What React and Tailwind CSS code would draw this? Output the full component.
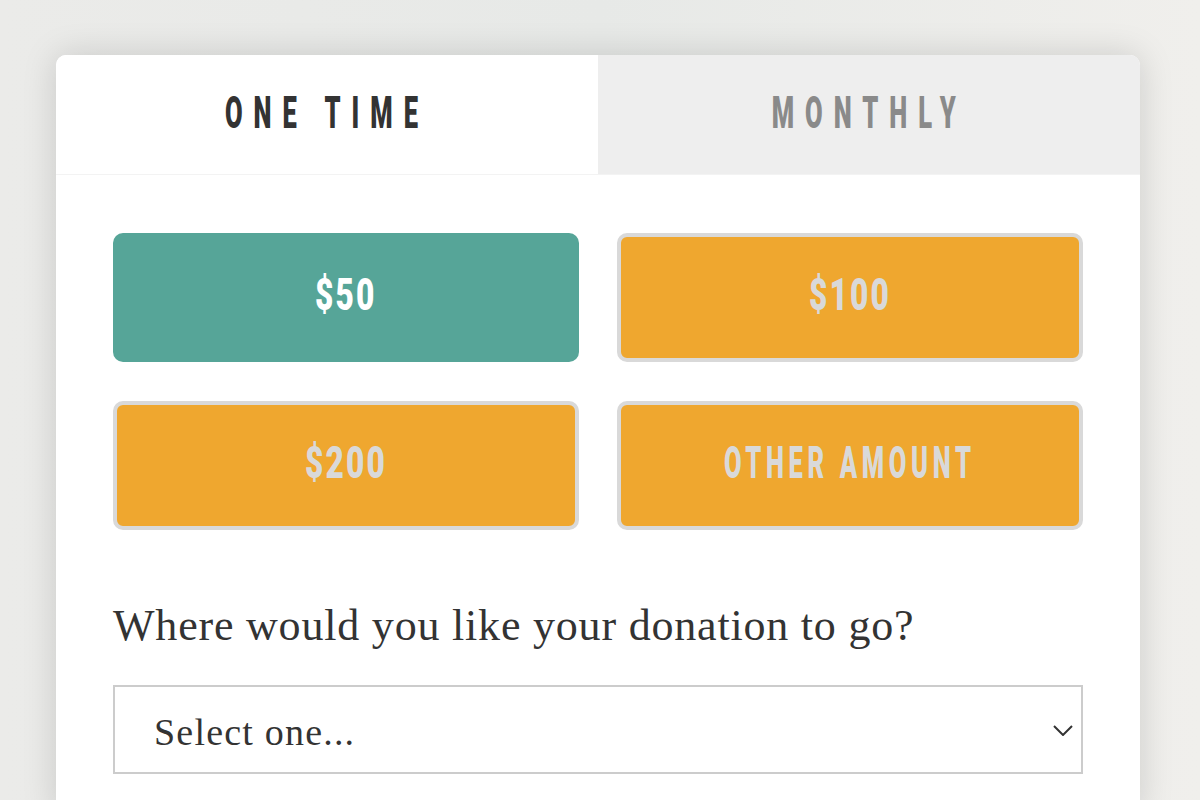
import { useState } from 'react';

const amounts = ['$50', '$100', '$200', 'Other Amount'];

// condensed display type: Roboto squeezed horizontally (no Bebas offline)
function Cond({ children, className = '' }) {
    return (
        <span className={`inline-block origin-center uppercase whitespace-nowrap ${className}`}>
            {children}
        </span>
    );
}

export default function App() {
    const [freq, setFreq] = useState('once');
    const [amount, setAmount] = useState('$50');

    return (
        <div className="h-[800px] overflow-hidden bg-[#e8e9e7] bg-[linear-gradient(90deg,#ebebe9_0%,#e7e9e7_50%,#f0efec_100%)] pl-[56px] pr-[60px] pt-[55px]">
            <div className="rounded-t-[10px] bg-white shadow-[0_0_34px_rgba(0,0,0,0.15)] overflow-hidden">
                {/* frequency tabs */}
                <div className="grid grid-cols-2 h-[120px] border-b border-[#f3f3f3]">
                    <button
                        onClick={() => setFreq('once')}
                        className={`flex items-center justify-center ${freq === 'once' ? 'bg-white text-[#333333]' : 'bg-[#eeeeee] text-[#8a8a8a]'}`}
                    >
                        <Cond className="font-['Roboto',sans-serif] font-black text-[44px] leading-none tracking-[19px] scale-x-[0.58] mt-[-4px]">
                            One Time
                        </Cond>
                    </button>
                    <button
                        onClick={() => setFreq('monthly')}
                        className={`flex items-center justify-center ${freq === 'monthly' ? 'bg-white text-[#333333]' : 'bg-[#eeeeee] text-[#8a8a8a]'}`}
                    >
                        <Cond className="font-['Roboto',sans-serif] font-black text-[44px] leading-none tracking-[19px] scale-x-[0.58] mt-[-4px]">
                            Monthly
                        </Cond>
                    </button>
                </div>

                <div className="px-[57px] pt-[58px] pb-10">
                    {/* amount choices */}
                    <div className="grid grid-cols-2 gap-x-[38px] gap-y-[39px]">
                        {amounts.map(a => {
                            const on = a === amount;
                            const isNum = a.startsWith('$');
                            return (
                                <button
                                    key={a}
                                    onClick={() => setAmount(a)}
                                    className={`h-[129px] rounded-[10px] flex items-center justify-center ${on
                                        ? 'bg-[#56a598] text-white'
                                        : 'bg-[#efa72f] border-4 border-[#d9d9d9] text-[#d9d9d9]'
                                        }`}
                                >
                                    <Cond className={`font-['Roboto',sans-serif] font-black text-[44px] leading-none mt-[-6px] ${isNum ? 'tracking-[3px] scale-x-[0.72]' : 'tracking-[8px] scale-x-[0.58]'}`}>
                                        {a}
                                    </Cond>
                                </button>
                            );
                        })}
                    </div>

                    <p className="mt-[72px] font-['Liberation_Serif',serif] text-[44px] leading-[48px] tracking-[0.8px] text-[#333333]">
                        Where would you like your donation to go?
                    </p>

                    {/* destination select */}
                    <div className="relative mt-[35px]">
                        <select className="appearance-none w-full h-[89px] border-2 border-[#cccccc] bg-white pl-[39px] pr-16 pt-[6px] font-['Liberation_Serif',serif] text-[38px] tracking-[1.2px] text-[#333333] outline-none">
                            <option>Select one...</option>
                            <option>Where it's needed most</option>
                            <option>Education</option>
                            <option>Clean water</option>
                        </select>
                        <svg className="absolute right-[10px] top-[40px] pointer-events-none" width="20" height="11" viewBox="0 0 20 11" fill="none">
                            <path d="M1 1l9 9 9-9" stroke="#333333" strokeWidth="2" />
                        </svg>
                    </div>
                </div>
            </div>
        </div>
    );
}
